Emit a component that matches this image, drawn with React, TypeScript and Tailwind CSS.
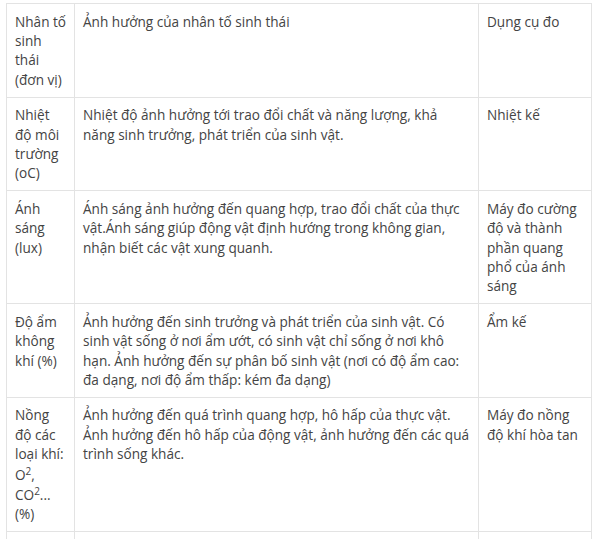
const sup = "static align-[5px] text-[10px] leading-[normal]"

const rows: [React.ReactNode, string, string][] = [
  ["Nhân tố sinh thái (đơn vị)", "Ảnh hưởng của nhân tố sinh thái", "Dụng cụ đo"],
  [
    "Nhiệt độ môi trường (oC)",
    "Nhiệt độ ảnh hưởng tới trao đổi chất và năng lượng, khả năng sinh trưởng, phát triển của sinh vật.",
    "Nhiệt kế",
  ],
  [
    "Ánh sáng (lux)",
    "Ánh sáng ảnh hưởng đến quang hợp, trao đổi chất của thực vật.Ánh sáng giúp động vật định hướng trong không gian, nhận biết các vật xung quanh.",
    "Máy đo cường độ và thành phần quang phổ của ánh sáng",
  ],
  [
    "Độ ẩm không khí (%)",
    "Ảnh hưởng đến sinh trưởng và phát triển của sinh vật. Có sinh vật sống ở nơi ẩm ướt, có sinh vật chỉ sống ở nơi khô hạn. Ảnh hưởng đến sự phân bố sinh vật (nơi có độ ẩm cao: đa dạng, nơi độ ẩm thấp: kém đa dạng)",
    "Ẩm kế",
  ],
  [
    <>
      Nồng độ các loại khí: O<sup className={sup}>2</sup>, CO<sup className={sup}>2</sup>... (%)
    </>,
    "Ảnh hưởng đến quá trình quang hợp, hô hấp của thực vật. Ảnh hưởng đến hô hấp của động vật, ảnh hưởng đến các quá trình sống khác.",
    "Máy đo nồng độ khí hòa tan",
  ],
  ["", "", ""],
]

export default function App() {
  const cell = "border border-[#e3e3e3] px-2 py-[7.5px] align-top"
  return (
    <div className="min-h-screen bg-white pl-[6px] pt-[3px] font-['Open_Sans',sans-serif] text-[13.6px] leading-[19.4px] text-[#444]">
      <table className="w-[585px] table-fixed border-collapse">
        <colgroup>
          <col className="w-[68px]" />
          <col className="w-[404px]" />
          <col className="w-[113px]" />
        </colgroup>
        <tbody>
          {rows.map((r, i) => (
            <tr key={i} className={i === rows.length - 1 ? "h-[40px]" : ""}>
              <td className="border border-[#e3e3e3] py-[7.5px] pl-2 pr-[5px] align-top">{r[0]}</td>
              <td className={cell}>{r[1]}</td>
              <td className={cell}>{r[2]}</td>
            </tr>
          ))}
        </tbody>
      </table>
    </div>
  )
}
